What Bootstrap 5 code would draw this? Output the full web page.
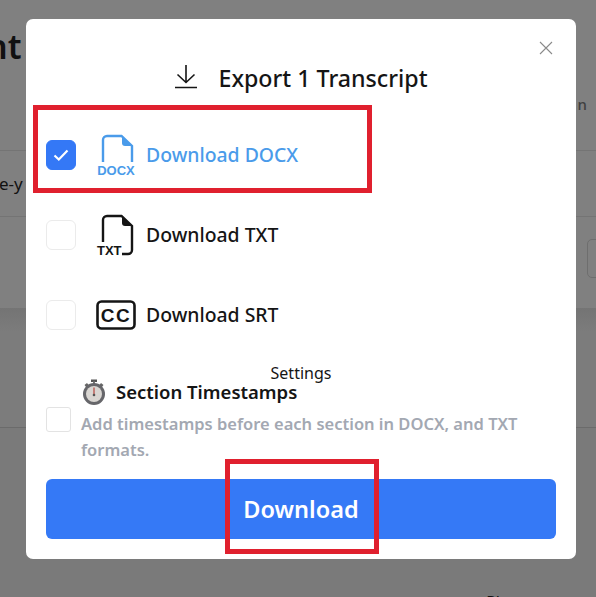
<!doctype html>
<html lang="en">
<head>
<meta charset="utf-8">
<meta name="viewport" content="width=device-width, initial-scale=1.0">
<title>Export Transcript</title>
<link href="https://cdn.jsdelivr.net/npm/bootstrap@5.3.0/dist/css/bootstrap.min.css" rel="stylesheet">
<style>
  html,body{height:100%;overflow:hidden;}
  body{font-family:"Noto Sans","Open Sans",Arial,sans-serif;background:#808080;color:#151515;}
  /* page behind the dialog */
  .behind{height:597px;overflow:hidden;color:#111;}
  .behind-head{height:151px;border-bottom:1px solid #747474;padding-top:24px;font-size:34px;font-weight:600;line-height:44px;margin-left:-14px;}
  .behind-head .tab-end{font-size:15px;color:#3f3f3f;font-weight:500;margin-top:65px;margin-right:9px;line-height:30px;}
  .behind-row{height:66px;border-bottom:1px solid #747474;font-size:17px;padding-top:20px;margin-left:-1px;}
  .behind-tools{height:91px;padding-top:22px;}
  .behind-btn{width:30px;height:39px;border:1px solid #6e6e6e;border-radius:5px;margin-right:-21px;}
  .behind-chart{height:120px;background:linear-gradient(#747474,#7c7c7c 24px);border-bottom:1px solid #6b6b6b;}
  .behind-rest{height:170px;background:#7a7a7a;font-size:16px;line-height:20px;padding:164px 96px 0 0;text-align:right;}

  .export-dialog{position:absolute;left:26px;top:19px;width:550px;height:540px;background:#fff;border-radius:7px;padding:0 20px;}
  .export-close{position:absolute;left:513px;top:22px;width:14px;height:14px;line-height:0;}
  .export-title{height:96px;padding-top:38px;font-size:23.2px;font-weight:500;line-height:42px;gap:20px;}
  .format-row{height:80px;gap:10px;font-size:19.4px;font-weight:500;}
  .format-row.on{color:#4a9bea;}
  .tick-box{width:30px;height:30px;border:1px solid #ebebeb;border-radius:6px;background:#fff;flex:none;margin-right:10px;}
  .tick-box.on{background:#3478f6;border-color:#3478f6;}
  .tick-box-sm{width:25px;height:25px;border:1px solid #e3e3e3;border-radius:3px;flex:none;margin-top:23px;}
  .format-ico{width:40px;height:44px;flex:none;display:block;}
  .ico-label{font-family:"Liberation Sans",Arial,sans-serif;font-weight:700;}
  .settings-cap{font-size:16px;line-height:22px;text-align:center;margin-top:7px;height:22px;}
  .stamp-wrap{gap:10px;height:97px;}
  .stamp-name{font-size:18.5px;font-weight:600;line-height:24px;gap:9px;margin-top:-5px;}
  .stamp-hint{font-size:16.5px;font-weight:600;color:#a3a8b2;line-height:26px;margin-top:6px;white-space:nowrap;}
  .dl-btn{display:block;width:510px;height:60px;margin-top:-2px;border:0;background:#3579f6;color:#fff;border-radius:6px;font-size:23.5px;font-weight:600;line-height:60px;padding:0;}
  .dl-btn:hover{background:#3579f6;color:#fff;}
  .callout{position:absolute;border:5px solid #e0202e;pointer-events:none;}
  .callout-a{left:33px;top:105px;width:339px;height:88px;}
  .callout-b{left:225px;top:459px;width:154px;height:95px;}
</style>
</head>
<body>

<!-- page behind the dialog -->
<div class="behind">
  <div class="behind-head d-flex justify-content-between">
    <div>nt</div>
    <div class="tab-end">n</div>
  </div>
  <div class="behind-row">e-y</div>
  <div class="behind-tools d-flex justify-content-end">
    <div class="behind-btn"></div>
  </div>
  <div class="behind-chart"></div>
  <div class="behind-rest">Pl</div>
</div>

<!-- export dialog -->
<div class="export-dialog">
  <button type="button" class="export-close btn p-0 border-0" aria-label="Close">
    <svg width="14" height="14" viewBox="0 0 14 14"><path d="M1 1l12 12M13 1L1 13" stroke="#8a8a8a" stroke-width="1.1" fill="none"/></svg>
  </button>

  <div class="export-title d-flex justify-content-center align-items-start">
    <svg class="mt-2" width="24" height="24" viewBox="0 0 24 24" fill="none" stroke="#151515" stroke-width="1.6"><path d="M12 0v17M3.500 9.500L12 17.500l8.500-8M1 22.500h22"/></svg>
    <span>Export 1 Transcript</span>
  </div>

  <div class="format-row on d-flex align-items-center">
    <span class="tick-box on d-flex align-items-center justify-content-center">
      <svg width="18" height="18" viewBox="0 0 18 18" fill="none" stroke="#fff" stroke-width="2.200"><path d="M2.500 9.500l4.300 4L15.500 4.500"/></svg>
    </span>
    <svg class="format-ico" viewBox="0 0 40 44">
      <path d="M7 29V7a4 4 0 0 1 4-4h14.500L36 13v16" fill="none" stroke="#4a9bea" stroke-width="2.400"/>
      <path d="M26 3.500L35.500 13H29a3 3 0 0 1-3-3z" fill="#4a9bea"/>
      <text class="ico-label" x="20" y="42" text-anchor="middle" font-size="13" fill="#4a9bea">DOCX</text>
    </svg>
    <span>Download DOCX</span>
  </div>

  <div class="format-row d-flex align-items-center">
    <span class="tick-box"></span>
    <svg class="format-ico" viewBox="0 0 40 44">
      <path d="M7 29V7a4 4 0 0 1 4-4h14.500L36 13v24a4 4 0 0 1-4 4h-6" fill="none" stroke="#151515" stroke-width="2.400"/>
      <path d="M26 3.500L35.500 13H29a3 3 0 0 1-3-3z" fill="#151515"/>
      <text class="ico-label" x="1" y="42" font-size="13" fill="#151515">TXT</text>
    </svg>
    <span>Download TXT</span>
  </div>

  <div class="format-row d-flex align-items-center">
    <span class="tick-box"></span>
    <svg class="format-ico" viewBox="0 0 40 44">
      <rect x="1.500" y="8.500" width="37" height="27" rx="4" fill="none" stroke="#151515" stroke-width="2.600"/>
      <text class="ico-label" x="20" y="29" text-anchor="middle" font-size="19" letter-spacing="1.500" fill="#151515">CC</text>
    </svg>
    <span>Download SRT</span>
  </div>

  <div class="settings-cap">Settings</div>

  <div class="stamp-wrap d-flex align-items-start">
    <span class="tick-box-sm"></span>
    <div>
      <div class="stamp-name d-flex align-items-center">
        <svg width="26" height="26" viewBox="0 0 26 26">
          <rect x="10" y="0.500" width="6" height="2.500" fill="#555"/>
          <rect x="12" y="2.500" width="2" height="3" fill="#777"/>
          <path d="M3.500 6l2.500-2 2 2.500-2.500 2zM22.500 6L20 4l-2 2.500 2.500 2z" fill="#666"/>
          <circle cx="13" cy="15" r="11" fill="#66666a"/>
          <circle cx="13" cy="15" r="8" fill="#d9d6d2"/>
          <path d="M13 8.500V16" stroke="#b8453e" stroke-width="1.200"/>
          <circle cx="13" cy="16" r="1.300" fill="#555"/>
        </svg>
        <span>Section Timestamps</span>
      </div>
      <div class="stamp-hint">Add timestamps before each section in DOCX, and TXT<br>formats.</div>
    </div>
  </div>

  <button type="button" class="btn dl-btn">Download</button>
</div>

<div class="callout callout-a"></div>
<div class="callout callout-b"></div>

<script src="https://cdn.jsdelivr.net/npm/bootstrap@5.3.0/dist/js/bootstrap.bundle.min.js"></script>
</body>
</html>
